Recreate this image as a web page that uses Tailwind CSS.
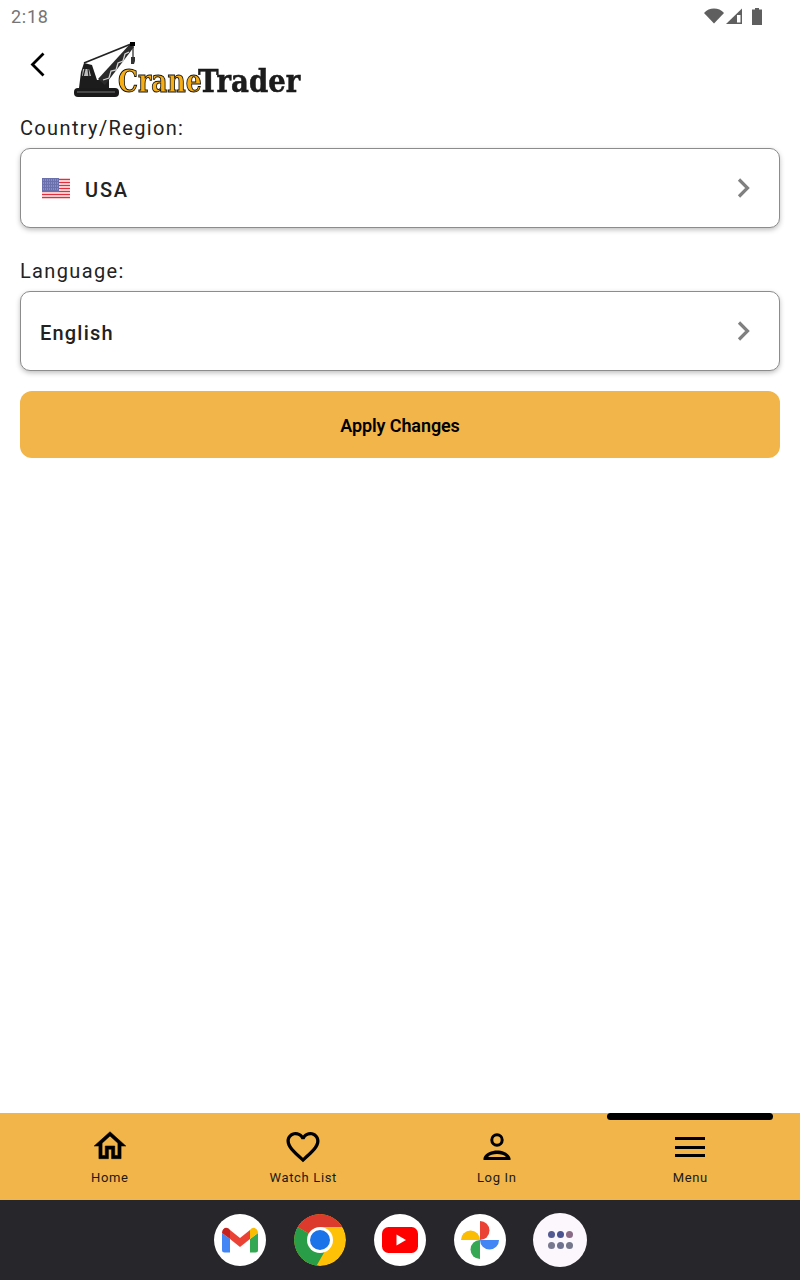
<!DOCTYPE html>
<html lang="en">
  <head>
    <meta charset="UTF-8" />
    <meta name="viewport" content="width=device-width, initial-scale=1.0" />
    <title>Crane Trader - Region</title>
    <script src="https://cdn.jsdelivr.net/npm/@tailwindcss/browser@4"></script>
  </head>

  <body class="bg-white font-['Roboto',sans-serif] text-[#1a1a1a]">
    <div class="flex flex-col h-[1280px] w-[800px] overflow-hidden">
      <!-- Status bar -->
      <div class="h-8 flex items-center justify-between pl-[11px] pr-[38px] shrink-0">
        <span class="text-[18px] leading-8 pt-px tracking-[0.7px] text-[#757575]">2:18</span>
        <div class="flex items-center gap-[2px]">
          <svg width="20" height="16" viewBox="0 0 20 16"><path d="M0 5C2.700 2 6.100.6 10 .6s7.300 1.400 10 4.400L10 15.500z" fill="#5f5f5f"/></svg>
          <svg width="16" height="16" viewBox="0 0 16 16"><path d="M0 16 16 .5V16z" fill="#5f5f5f"/><path d="M11 7h3.500v7.500H11z" fill="#fff"/></svg>
          <svg width="10" height="17" class="ml-[8px]" viewBox="0 0 10 17"><path d="M3 0h4v1.500h3V17H0V1.500h3z" fill="#5f5f5f"/></svg>
        </div>
      </div>

      <!-- Header -->
      <header class="h-[84px] shrink-0 flex items-start">
        <svg class="ml-[26px] mt-[17px]" width="24" height="30" viewBox="0 0 24 30">
          <path d="M17.500 4.500 6.500 15.500l11 11" fill="none" stroke="#000" stroke-width="2.800"/>
        </svg>
        <div class="ml-[24px] mt-[10px] relative w-[228px] h-[56px]">
          <svg class="absolute left-0 top-0 blur-[0.3px]" width="64" height="56" viewBox="0 0 64 56">
            <!-- crawler -->
            <rect x="0" y="46" width="45" height="9" rx="4" fill="#1a1a1a"/>
            <path d="M3 50h38" stroke="#777" stroke-width="1"/>
            <!-- body -->
            <path d="M5 46 7 30l3-9 8 2 5 15h12v8z" fill="#1c1c1c"/>
            <path d="M9 27h6l2 7H8z" fill="#bdbdbd"/>
            <path d="M11 27 9 35M14 27l1 8" stroke="#222" stroke-width="1.200"/>
            <!-- pendant -->
            <path d="M10 21 57 2" stroke="#222" stroke-width="1.800"/>
            <!-- boom truss -->
            <path d="M56 2 24 37l7 6L60 5z" fill="#2a2a2a"/>
            <path d="M29 38 35 36 37 29 42 28 44 21 49 19 51 12 55 10" fill="none" stroke="#d4d4d4" stroke-width="1.300"/>
            <rect x="56" y="0" width="5" height="4" fill="#000"/>
            <path d="M59 4v12" stroke="#333" stroke-width="1.300"/>
            <path d="M57 15h4v4l-1 3h-3z" fill="#333"/>
          </svg>
          <div class="absolute left-[44px] top-[21px] flex items-baseline font-['DejaVu_Serif',serif] font-bold text-[31px] leading-[36px] whitespace-nowrap blur-[0.4px]">
            <span class="inline-block w-[80px] origin-left scale-x-[0.81] text-[#f7ad14] [-webkit-text-stroke:1px_#111]">Crane</span><span class="inline-block w-[100px] origin-left scale-x-[0.89] text-[#1c1c1c] [-webkit-text-stroke:0.500px_#111]">Trader</span>
          </div>
        </div>
      </header>

      <!-- Form -->
      <main class="flex-1 px-5">
        <label class="block h-6 leading-6 text-[20px] tracking-[1.35px] text-[#222]">Country/Region:</label>
        <button class="mt-2 w-full h-20 flex items-center justify-between rounded-[10px] border border-[#8c8c8c] bg-white shadow-[0_2px_5px_rgba(0,0,0,0.25)] pl-[21px] pr-[26px]">
          <span class="flex items-center gap-[15px]">
            <svg width="28" height="21" viewBox="0 0 28 21" class="blur-[0.3px]">
              <rect width="28" height="21" fill="#fff"/>
              <path d="M0 1.500h28M0 4.500h28M0 7.500h28M0 10.500h28M0 13.500h28M0 16.500h28M0 19.500h28" stroke="#e0303f" stroke-width="1.700"/>
              <rect width="17" height="14" fill="#6a70ab"/>
              <path d="M1 2h15M1 5h15M1 8h15M1 11h15" stroke="#a6abcf" stroke-width="1" stroke-dasharray="1 1"/>
            </svg>
            <span class="pt-[3px] text-[20px] font-medium tracking-[1.8px] text-[#222]">USA</span>
          </span>
          <svg width="18" height="24" viewBox="0 0 18 24"><path d="M4 3.500 12.500 12 4 20.500" fill="none" stroke="#808080" stroke-width="3.200"/></svg>
        </button>

        <label class="block mt-[31px] h-6 leading-6 text-[20px] tracking-[1.35px] text-[#222]">Language:</label>
        <button class="mt-2 w-full h-20 flex items-center justify-between rounded-[10px] border border-[#8c8c8c] bg-white shadow-[0_2px_5px_rgba(0,0,0,0.25)] pl-[19px] pr-[26px]">
          <span class="pt-[3px] text-[20px] font-medium tracking-[1.2px] text-[#222]">English</span>
          <svg width="18" height="24" viewBox="0 0 18 24"><path d="M4 3.500 12.500 12 4 20.500" fill="none" stroke="#808080" stroke-width="3.200"/></svg>
        </button>

        <button class="mt-5 w-full h-[67px] pt-px rounded-xl bg-[#f1b549] text-[18px] font-semibold tracking-[-0.1px] text-black">Apply Changes</button>
      </main>

      <!-- Bottom nav -->
      <nav class="relative h-[87px] shrink-0 bg-[#f1b549] grid grid-cols-4 px-[13px] text-[13px] tracking-[0.65px] text-[#1a1a1a]">
        <a class="flex flex-col items-center">
          <svg class="mt-[14px]" width="38" height="38" viewBox="0 0 24 24"><path d="M12 5.690l5 4.500V18h-2v-6H9v6H7v-7.810l5-4.500M12 3L2 12h3v8h6v-6h2v6h6v-8h3L12 3z" stroke="#000" stroke-width="0.350"/></svg>
          <span class="mt-[3px] leading-5">Home</span>
        </a>
        <a class="flex flex-col items-center">
          <svg class="mt-[14px]" width="40" height="38" viewBox="0 0 24 23"><path d="M16.500 3c-1.740 0-3.410.81-4.500 2.090C10.910 3.810 9.240 3 7.500 3 4.420 3 2 5.420 2 8.500c0 3.780 3.400 6.860 8.550 11.540L12 21.350l1.450-1.320C18.600 15.360 22 12.280 22 8.500 22 5.420 19.580 3 16.500 3zm-4.400 15.550l-.1.1-.1-.1C7.140 14.240 4 11.390 4 8.500 4 6.500 5.500 5 7.500 5c1.540 0 3.040.99 3.570 2.360h1.870C13.460 5.990 14.960 5 16.500 5c2 0 3.500 1.500 3.500 3.500 0 2.890-3.140 5.740-7.900 10.050z"/></svg>
          <span class="mt-[3px] leading-5">Watch List</span>
        </a>
        <a class="flex flex-col items-center">
          <svg class="mt-[14px]" width="38" height="38" viewBox="0 0 38 38">
            <circle cx="19" cy="13" r="5.200" fill="none" stroke="#000" stroke-width="3"/>
            <path d="M5.500 33v-2C7.500 25.500 14 23.500 19 23.500s11.500 2 13.500 7.500v2zM10 30h18C26 27.800 23 27 19 27s-7 .8-9 3z" fill="#000" fill-rule="evenodd"/>
          </svg>
          <span class="mt-[3px] leading-5">Log In</span>
        </a>
        <a class="relative flex flex-col items-center">
          <span class="absolute top-0 left-[13px] w-[166px] h-[7px] rounded-[4px] bg-black"></span>
          <svg class="mt-[14px]" width="38" height="38" viewBox="0 0 38 38"><path d="M4 10h30v3H4zM4 19h30v3H4zM4 27h30v3H4z"/></svg>
          <span class="mt-[3px] leading-5">Menu</span>
        </a>
      </nav>

      <!-- System dock -->
      <div class="h-20 shrink-0 bg-[#26262b] flex items-center justify-center gap-7">
        <div class="w-[52px] h-[52px] rounded-full bg-white flex items-center justify-center">
          <svg width="36" height="26" viewBox="0 0 36 26">
            <path d="M0 6v17a2.500 2.500 0 0 0 2.500 2.500H8V12z" fill="#4285f4"/>
            <path d="M28 12v13.500h5.500A2.500 2.500 0 0 0 36 23V6z" fill="#34a853"/>
            <path d="M8 3 18 11l10-8v9l-10 8L8 12z" fill="#ea4335"/>
            <path d="M0 6c0-5 5-7 8-3v9L0 6z" fill="#c5221f"/>
            <path d="M36 6c0-5-5-7-8-3v9l8-6z" fill="#fbbc04"/>
          </svg>
        </div>
        <div class="w-[52px] h-[52px] rounded-full overflow-hidden">
          <svg width="52" height="52" viewBox="0 0 52 52">
            <circle cx="26" cy="26" r="26" fill="#ffc107"/>
            <path d="M26 26 3.500 13A26 26 0 0 1 48.500 13H26z" fill="#db3a2d"/>
            <path d="M26 26 3.500 13A26 26 0 0 0 22.500 51.800L35 30z" fill="#2a9d49"/>
            <circle cx="26" cy="26" r="13" fill="#fff"/>
            <circle cx="26" cy="26" r="10" fill="#1a73e8"/>
          </svg>
        </div>
        <div class="w-[52px] h-[52px] rounded-full bg-white flex items-center justify-center">
          <svg width="36" height="26" viewBox="0 0 36 26">
            <rect width="36" height="26" rx="6.500" fill="#f00"/>
            <path d="M14.500 7.500v11l9.500-5.500z" fill="#fff"/>
          </svg>
        </div>
        <div class="w-[52px] h-[52px] rounded-full bg-white flex items-center justify-center">
          <svg width="40" height="40" viewBox="0 0 40 40">
            <path d="M20 20V1a9.500 9.500 0 0 1 0 19z" fill="#ea4335"/>
            <path d="M20 20h19a9.500 9.500 0 0 1-19 0z" fill="#4285f4"/>
            <path d="M20 20v19a9.500 9.500 0 0 1 0-19z" fill="#34a853"/>
            <path d="M20 20H1a9.500 9.500 0 0 1 19 0z" fill="#fbbc04"/>
          </svg>
        </div>
        <div class="w-[54px] h-[54px] -mx-px rounded-full bg-[#fbf7fd] grid grid-cols-[repeat(3,7px)] content-center justify-center gap-x-[2px] gap-y-1">
          <span class="w-[7px] h-[7px] rounded-full bg-[#545a92]"></span>
          <span class="w-[7px] h-[7px] rounded-full bg-[#4a5290]"></span>
          <span class="w-[7px] h-[7px] rounded-full bg-[#8a6a86]"></span>
          <span class="w-[7px] h-[7px] rounded-full bg-[#78788f]"></span>
          <span class="w-[7px] h-[7px] rounded-full bg-[#6f7190]"></span>
          <span class="w-[7px] h-[7px] rounded-full bg-[#75768c]"></span>
        </div>
      </div>
    </div>
  </body>
</html>
